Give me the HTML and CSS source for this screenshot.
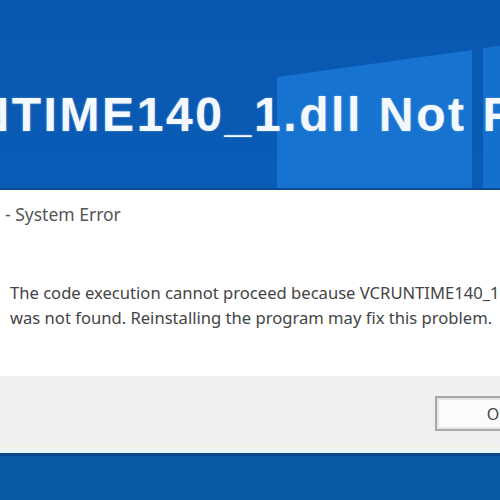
FILE: index.html
```html
<!DOCTYPE html>
<html>
<head>
<meta charset="utf-8">
<link rel="stylesheet" href="styles.css">
</head>
<body>
<div class="page">
  <header class="hero">
    <svg class="logo" width="500" height="192" viewBox="0 0 500 192">
      <polygon points="277,77 472,50 472,192 277,192" fill="#1673d0"/>
      <polygon points="483,48 520,43 520,192 483,192" fill="#1370cd"/>
    </svg>
    <h1 class="headline">VCRUNTIME140_1.dll Not Found</h1>
  </header>
  <section class="dialog">
    <div class="dialog-title">- System Error</div>
    <div class="dialog-body">
      <p class="msg-line">The code execution cannot proceed because VCRUNTIME140_1.dll</p>
      <p class="msg-line">was not found. Reinstalling the program may fix this problem.</p>
    </div>
    <div class="dialog-footer">
      <button class="btn">OK</button>
    </div>
    <div class="dialog-edge"></div>
  </section>
  <div class="bottom-bar"></div>
</div>
</body>
</html>
```
FILE: styles.css
```css
html, body {
  margin: 0;
  padding: 0;
  width: 500px;
  height: 500px;
  overflow: hidden;
  background: #0a5aa8;
}
.page {
  width: 500px;
  height: 500px;
  overflow: hidden;
  display: flex;
  flex-direction: column;
}
.hero {
  position: relative;
  height: 190px;
  flex: 0 0 190px;
  background: linear-gradient(#0957b0, #0a5cb6);
  border-bottom: 2px solid #0a4b93;
  padding-top: 91px;
  box-sizing: border-box;
  overflow: hidden;
}
.logo {
  position: absolute;
  left: 0;
  top: 0;
}
.headline {
  position: relative;
  margin: 0 0 0 -172px;
  font-family: "Liberation Sans", Arial, sans-serif;
  font-weight: bold;
  font-size: 48px;
  line-height: 48px;
  letter-spacing: 2.6px;
  color: #f4f8ff;
  white-space: nowrap;
  text-shadow: 0 0 2px rgba(255,255,255,0.4);
}
.dialog {
  background: #ffffff;
  display: flex;
  flex-direction: column;
}
.dialog-title {
  font-family: "Noto Sans", "Open Sans", sans-serif;
  font-size: 17.5px;
  line-height: 22px;
  color: #555;
  padding: 13px 0 0 5px;
  height: 38px;
  box-sizing: border-box;
  white-space: nowrap;
}
.dialog-body {
  padding: 52px 0 0 10px;
  height: 148px;
  box-sizing: border-box;
}
.msg-line {
  margin: 0;
  font-family: "Noto Sans", "Open Sans", sans-serif;
  font-size: 16.6px;
  line-height: 25px;
  color: #444;
  white-space: nowrap;
}
.dialog-footer {
  background: #f0f0f0;
  height: 70px;
  box-sizing: border-box;
  padding: 20px 0 0 435px;
  display: flex;
  align-items: flex-start;
}
.btn {
  flex: 0 0 auto;
  width: 126px;
  height: 35px;
  border: 2px solid #a8a8a8;
  box-shadow: inset 0 0 0 2px #e6e6e6;
  background: #fbfbfb;
  font-family: "Noto Sans", "Open Sans", sans-serif;
  font-size: 16px;
  color: #444;
  padding: 0;
}
.dialog-edge {
  height: 7px;
  background: linear-gradient(#f4f1e6, #e6f7fb);
}
.bottom-bar {
  flex: 1 1 auto;
  background: #0a5aa8;
  border-top: 3px solid #0b4784;
}
```
